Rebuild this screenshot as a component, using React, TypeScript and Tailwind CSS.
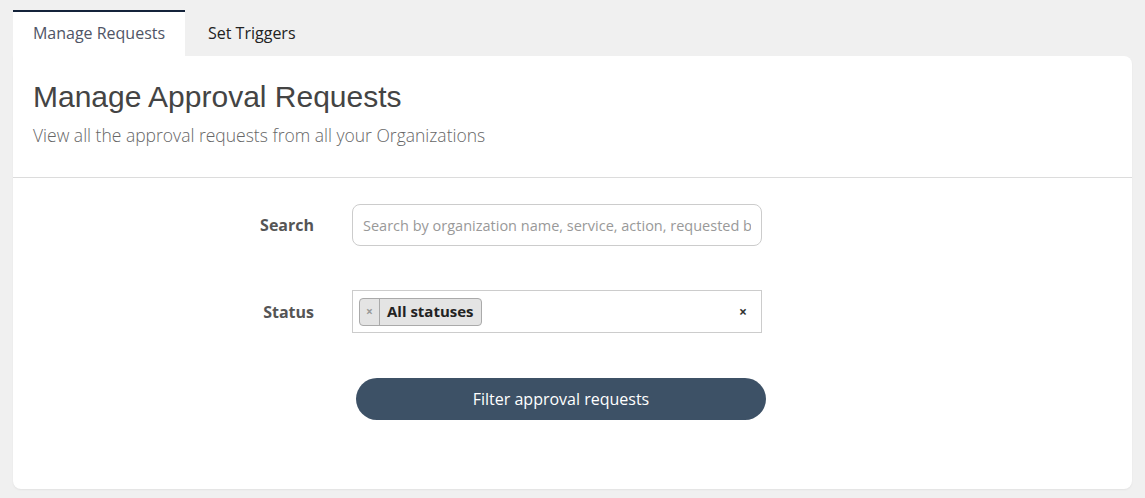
import { useState } from "react"

const sans = "font-['Open_Sans',sans-serif]"

export default function App() {
  const [tab, setTab] = useState("manage")
  const [query, setQuery] = useState("")

  return (
    <div className={`min-h-screen bg-[#f0f0f0] px-[13px] pt-[10px] ${sans}`}>
      <nav className="flex">
        <button
          onClick={() => setTab("manage")}
          className={`h-[46px] w-[172px] border-t-2 pb-[2px] text-[16px] ${
            tab === "manage" ? "border-[#14233a] bg-white text-[#4f5566]" : "border-transparent text-[#222]"
          }`}
        >
          Manage Requests
        </button>
        <button
          onClick={() => setTab("triggers")}
          className={`h-[46px] px-[23px] border-t-2 pb-[2px] text-[16px] ${
            tab === "triggers" ? "border-[#14233a] bg-white text-[#4f5566]" : "border-transparent text-[#222]"
          }`}
        >
          Set Triggers
        </button>
      </nav>

      <section className="rounded-b-lg rounded-tr-lg bg-white shadow-[0_1px_2px_rgba(0,0,0,0.06)]">
        <header className="border-b border-[#dcdcdc] px-[20px] pt-[24px] pb-[30px]">
          <h1 className="font-['Liberation_Sans',Arial,sans-serif] text-[30px] leading-[34px] text-[#444]">
            Manage Approval Requests
          </h1>
          <p className="mt-[9px] text-[17.5px] leading-[24px] font-light text-[#666]">
            View all the approval requests from all your Organizations
          </p>
        </header>

        <form className="flex flex-col pt-[26px] pb-[69px]" onSubmit={e => e.preventDefault()}>
          <div className="flex items-center">
            <label className="w-[301px] text-right text-[16px] font-bold text-[#555]">Search</label>
            <input
              value={query}
              onChange={e => setQuery(e.target.value)}
              placeholder="Search by organization name, service, action, requested by"
              className="ml-[38px] h-[42px] w-[410px] rounded-lg border border-[#ccc] px-[10px] text-[14.5px] text-[#333] placeholder:text-[#999] outline-none"
            />
          </div>

          <div className="mt-[44px] flex items-center">
            <label className="w-[301px] text-right text-[16px] font-bold text-[#555]">Status</label>
            <div className="ml-[38px] flex h-[43px] w-[410px] items-center border border-[#ccc] pl-[6px] pr-[14px]">
              <span className="flex h-[28px] items-stretch rounded border border-[#aaa] bg-[#e4e4e4]">
                <span className="flex w-[20px] items-center justify-center border-r border-[#aaa] text-[12px] font-bold text-[#999]">
                  ×
                </span>
                <span className="flex items-center px-[7px] text-[15px] font-bold text-[#222]">All statuses</span>
              </span>
              <span className="ml-auto text-[14px] font-bold text-[#333]">×</span>
            </div>
          </div>

          <button
            type="submit"
            className="mt-[45px] ml-[343px] h-[42px] w-[410px] rounded-full bg-[#3d5166] text-[16px] font-medium text-white"
          >
            Filter approval requests
          </button>
        </form>
      </section>
    </div>
  )
}
